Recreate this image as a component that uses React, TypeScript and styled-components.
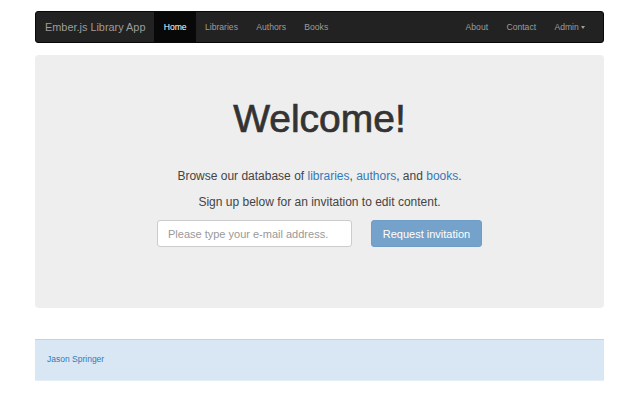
import React from "react";
import styled, { createGlobalStyle } from "styled-components";

const Global = createGlobalStyle`
  html, body { margin: 0; padding: 0; background: #ffffff; }
  body { font-family: "Liberation Sans", Arial, sans-serif; color: #333333; }
  * { box-sizing: border-box; }
`;

const Page = styled.div`
  width: 640px;
  padding: 11px 36px 0 35px;
  display: flex;
  flex-direction: column;
`;

const Navbar = styled.nav`
  height: 32px;
  background: #222222;
  border: 1px solid #080808;
  border-radius: 3px;
  display: flex;
  align-items: stretch;
  padding-left: 9px;
  padding-right: 9px;
`;

const Brand = styled.a`
  display: flex;
  align-items: center;
  font-size: 10.9px;
  color: #9d9d9d;
  text-decoration: none;
  margin-right: 9px;
`;

const NavGroup = styled.ul`
  list-style: none;
  margin: 0;
  padding: 0;
  display: flex;
  align-items: stretch;
`;

const Spacer = styled.div`
  flex: 1;
`;

const NavItem = styled.li<{ $active?: boolean }>`
  display: flex;
  align-items: center;
  padding: 0 9.2px;
  margin-top: -1px;
  margin-bottom: -1px;
  font-size: 8.6px;
  color: ${(p) => (p.$active ? "#ffffff" : "#9d9d9d")};
  background: ${(p) => (p.$active ? "#080808" : "transparent")};
`;

const Caret = styled.span`
  display: inline-block;
  width: 0;
  height: 0;
  margin-left: 2px;
  margin-top: 1px;
  border-top: 3px solid #9d9d9d;
  border-left: 2.5px solid transparent;
  border-right: 2.5px solid transparent;
`;

const Jumbotron = styled.section`
  margin-top: 12px;
  height: 253px;
  background: #eeeeee;
  border-radius: 4px;
  display: flex;
  flex-direction: column;
  align-items: center;
  padding-top: 42px;
`;

const Title = styled.h1`
  margin: 0;
  font-size: 39px;
  line-height: 44px;
  font-weight: 400;
  color: #333333;
  -webkit-text-stroke: 0.7px #333333;
`;

const Lead = styled.p<{ $gap: number }>`
  margin: ${(p) => p.$gap}px 0 0;
  font-size: 12px;
  line-height: 18px;
  color: #444444;
`;

const Link = styled.a`
  color: #337ab7;
  text-decoration: none;
`;

const Form = styled.form`
  margin-top: 9px;
  display: flex;
  gap: 19px;
`;

const Input = styled.input`
  width: 195px;
  height: 27px;
  border: 1px solid #cccccc;
  border-radius: 3px;
  background: #ffffff;
  padding: 0 10px;
  font-family: "Liberation Sans", Arial, sans-serif;
  font-size: 11px;
  color: #555;
  outline: none;
  &::placeholder { color: #999999; }
`;

const Button = styled.button`
  width: 111px;
  height: 27px;
  border: 1px solid #6f9dc6;
  border-radius: 3px;
  background: #74a2ca;
  color: #ffffff;
  font-family: "Liberation Sans", Arial, sans-serif;
  font-size: 11px;
  padding: 0;
`;

const Footer = styled.footer`
  margin-top: 31px;
  height: 42px;
  background: #d9e7f5;
  border-top: 1px solid #bcd3ea;
  border-bottom: 1px solid #e4eef8;
  display: flex;
  align-items: center;
  padding-left: 12px;
  padding-bottom: 3px;
`;

const FooterLink = styled.a`
  font-size: 8.5px;
  color: #337ab7;
  text-decoration: none;
`;

export default function App() {
  return (
    <>
      <Global />
      <Page>
        <Navbar>
          <Brand href="#">Ember.js Library App</Brand>
          <NavGroup>
            <NavItem $active>Home</NavItem>
            <NavItem>Libraries</NavItem>
            <NavItem>Authors</NavItem>
            <NavItem>Books</NavItem>
          </NavGroup>
          <Spacer />
          <NavGroup>
            <NavItem>About</NavItem>
            <NavItem>Contact</NavItem>
            <NavItem>
              Admin<Caret />
            </NavItem>
          </NavGroup>
        </Navbar>
        <Jumbotron>
          <Title>Welcome!</Title>
          <Lead $gap={26}>
            Browse our database of <Link href="#">libraries</Link>,{" "}
            <Link href="#">authors</Link>, and <Link href="#">books</Link>.
          </Lead>
          <Lead $gap={8}>Sign up below for an invitation to edit content.</Lead>
          <Form onSubmit={(e) => e.preventDefault()}>
            <Input type="email" placeholder="Please type your e-mail address." />
            <Button type="button" disabled>
              Request invitation
            </Button>
          </Form>
        </Jumbotron>
        <Footer>
          <FooterLink href="#">Jason Springer</FooterLink>
        </Footer>
      </Page>
    </>
  );
}
